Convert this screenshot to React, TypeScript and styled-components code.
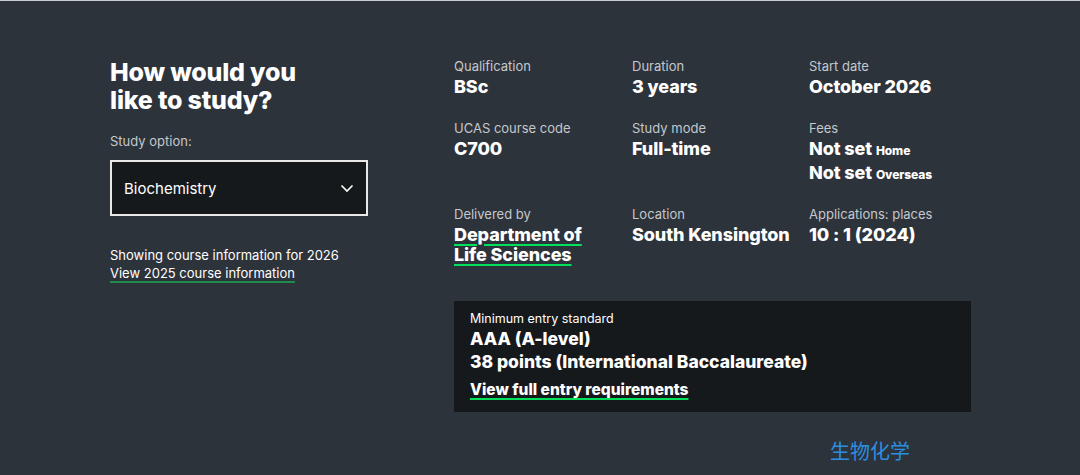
import React from "react";
import styled, { createGlobalStyle } from "styled-components";

const GlobalStyle = createGlobalStyle`
  html, body {
    margin: 0;
    padding: 0;
    background: #2d333b;
  }
  body {
    font-family: Inter, "Noto Sans", "Liberation Sans", sans-serif;
    color: #fff;
  }
`;

const Page = styled.main`
  min-height: 475px;
  box-sizing: border-box;
  border-top: 1px solid #c8ccd0;
  background: #2d333b;
  display: flex;
  padding: 56px 0 0 110px;
`;

const Side = styled.section`
  width: 344px;
  flex-shrink: 0;
  padding-top: 1px;
`;

const Heading = styled.h2`
  margin: 0;
  font-size: 25px;
  line-height: 28px;
  font-weight: 800;
  letter-spacing: -0.2px;
  color: #fff;
`;

const FieldLabel = styled.div`
  margin-top: 19px;
  font-size: 13px;
  color: #c4c8cd;
`;

const Select = styled.div`
  margin-top: 11px;
  width: 258px;
  height: 56px;
  box-sizing: border-box;
  border: 2px solid #e8e8e8;
  background: #16191c;
  display: flex;
  align-items: center;
  justify-content: space-between;
  padding: 0 12px 0 12px;
  font-size: 15px;
  color: #fff;
`;

const Note = styled.p`
  margin: 30px 0 0;
  font-size: 13px;
  line-height: 18px;
  color: #fff;
`;

const Link = styled.a<{ $line: string }>`
  color: #fff;
  text-decoration: underline;
  text-decoration-color: ${(p) => p.$line};
  text-decoration-thickness: 2px;
  text-underline-offset: 3px;
  cursor: pointer;
`;

const Details = styled.section`
  width: 517px;
`;

const Grid = styled.dl`
  margin: 0;
  display: grid;
  grid-template-columns: 178px 177px 162px;
  row-gap: 22px;
`;

const Item = styled.div``;

const Label = styled.dt`
  font-size: 13px;
  line-height: 18px;
  color: #c4c8cd;
`;

const Value = styled.dd`
  margin: 2px 0 0;
  font-size: 18px;
  line-height: 20px;
  font-weight: 800;
  letter-spacing: -0.1px;
  color: #fff;

  & + & {
    margin-top: 4px;
  }
`;

const Small = styled.span`
  font-size: 12px;
  line-height: 0;
  font-weight: 800;
`;

const EntryBox = styled.div`
  margin-top: 36px;
  background: #16191c;
  padding: 9px 16px 13px;
`;

const EntryLabel = styled.div`
  font-size: 12.5px;
  line-height: 17px;
  color: #fff;
`;

const EntryValue = styled.div`
  font-size: 17.5px;
  line-height: 23px;
  font-weight: 800;
  color: #fff;
`;

const EntryLink = styled(Link)`
  display: inline-block;
  margin-top: 7px;
  font-size: 15.5px;
  font-weight: 800;
`;

const Chinese = styled.div`
  margin: 24px 61px 0 0;
  text-align: right;
  font-family: "Noto Sans CJK SC", sans-serif;
  font-size: 20px;
  color: #2b8ee0;
`;

const Chevron = () => (
  <svg width="14" height="14" viewBox="0 0 14 14" fill="none">
    <path d="M1.5 4.5 7 10l5.5-5.5" stroke="#fff" strokeWidth="1.6" />
  </svg>
);

const green = "#00e05a";

export default function App() {
  return (
    <>
      <GlobalStyle />
      <Page>
        <Side>
          <Heading>
            How would you
            <br />
            like to study?
          </Heading>
          <FieldLabel>Study option:</FieldLabel>
          <Select>
            <span>Biochemistry</span>
            <Chevron />
          </Select>
          <Note>
            Showing course information for 2026
            <br />
            <Link $line="#1f8a4c">View 2025 course information</Link>
          </Note>
        </Side>
        <Details>
          <Grid>
            <Item>
              <Label>Qualification</Label>
              <Value>BSc</Value>
            </Item>
            <Item>
              <Label>Duration</Label>
              <Value>3 years</Value>
            </Item>
            <Item>
              <Label>Start date</Label>
              <Value>October 2026</Value>
            </Item>
            <Item>
              <Label>UCAS course code</Label>
              <Value>C700</Value>
            </Item>
            <Item>
              <Label>Study mode</Label>
              <Value>Full-time</Value>
            </Item>
            <Item>
              <Label>Fees</Label>
              <Value>
                Not set <Small>Home</Small>
              </Value>
              <Value>
                Not set <Small>Overseas</Small>
              </Value>
            </Item>
            <Item>
              <Label>Delivered by</Label>
              <Value>
                <Link $line={green}>
                  Department of
                  <br />
                  Life Sciences
                </Link>
              </Value>
            </Item>
            <Item>
              <Label>Location</Label>
              <Value>South Kensington</Value>
            </Item>
            <Item>
              <Label>Applications: places</Label>
              <Value>10 : 1 (2024)</Value>
            </Item>
          </Grid>
          <EntryBox>
            <EntryLabel>Minimum entry standard</EntryLabel>
            <EntryValue>AAA (A-level)</EntryValue>
            <EntryValue>38 points (International Baccalaureate)</EntryValue>
            <EntryLink $line={green}>View full entry requirements</EntryLink>
          </EntryBox>
          <Chinese>生物化学</Chinese>
        </Details>
      </Page>
    </>
  );
}
